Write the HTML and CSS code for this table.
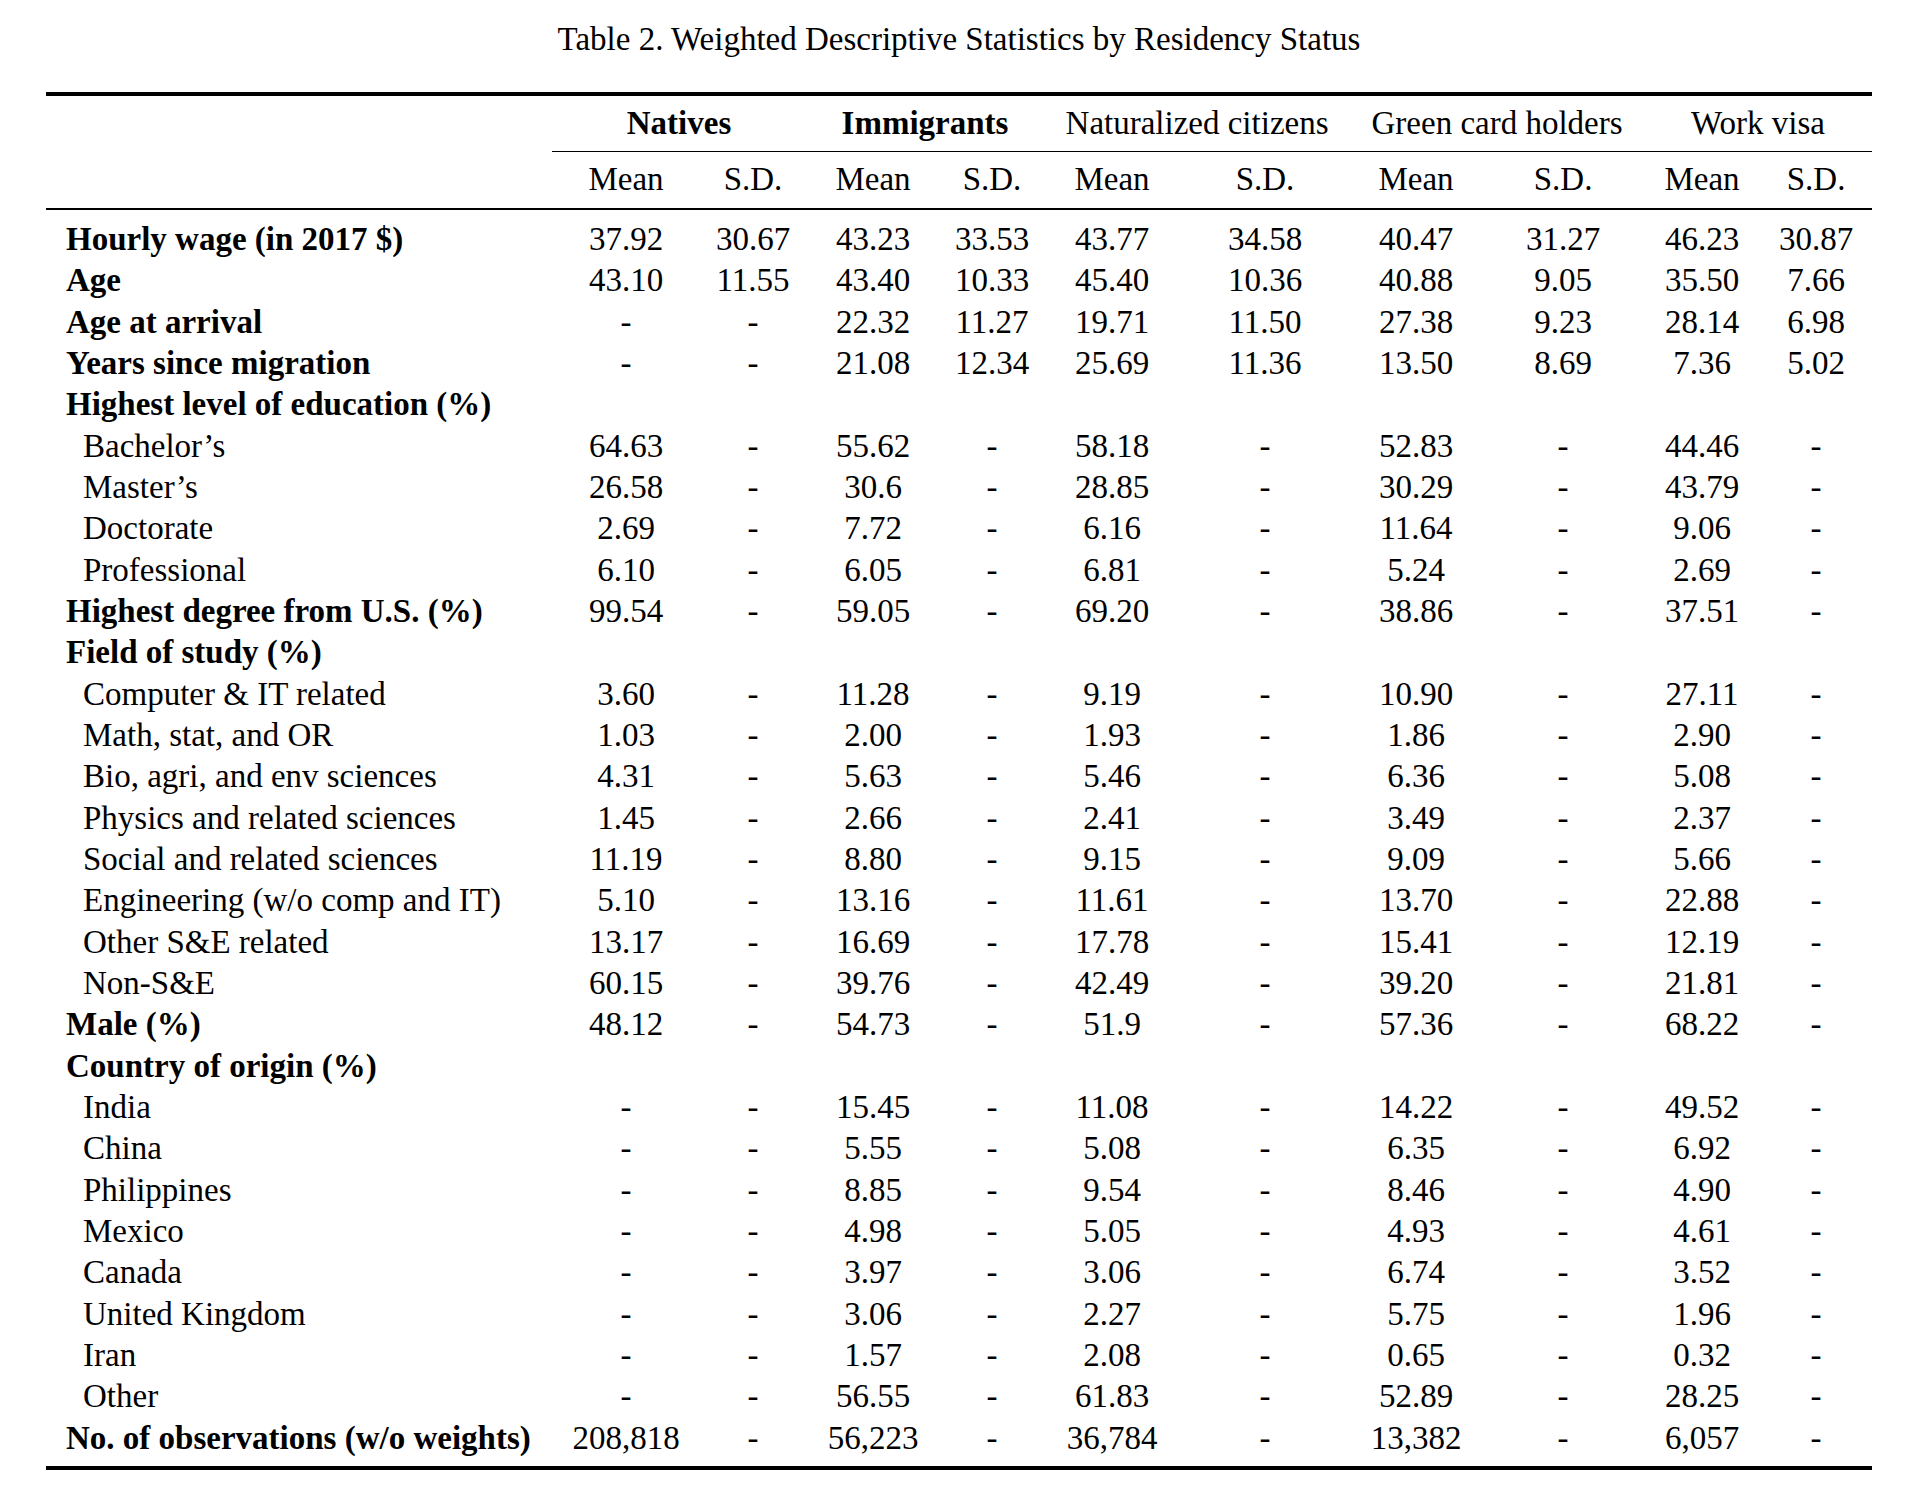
FILE: index.html
```html
<!DOCTYPE html>
<html lang="en">
<head>
<meta charset="utf-8">
<title>Table 2</title>
<link rel="stylesheet" href="styles.css">
</head>
<body>
<div class="page">
  <div class="caption">Table 2. Weighted Descriptive Statistics by Residency Status</div>
  <table class="stats">
    <colgroup>
      <col class="c-label">
      <col class="c1"><col class="c2"><col class="c3"><col class="c4"><col class="c5">
      <col class="c6"><col class="c7"><col class="c8"><col class="c9"><col class="c10">
    </colgroup>
    <thead>
      <tr class="grp">
        <th class="blank"></th>
        <th colspan="2" class="strong">Natives</th>
        <th colspan="2" class="strong">Immigrants</th>
        <th colspan="2">Naturalized citizens</th>
        <th colspan="2">Green card holders</th>
        <th colspan="2">Work visa</th>
      </tr>
      <tr class="sub">
        <th></th>
        <th>Mean</th><th>S.D.</th>
        <th>Mean</th><th>S.D.</th>
        <th>Mean</th><th>S.D.</th>
        <th>Mean</th><th>S.D.</th>
        <th>Mean</th><th>S.D.</th>
      </tr>
    </thead>
    <tbody>
      <tr><td class="lab b">Hourly wage (in 2017 $)</td><td>37.92</td><td>30.67</td><td>43.23</td><td>33.53</td><td>43.77</td><td>34.58</td><td>40.47</td><td>31.27</td><td>46.23</td><td>30.87</td></tr>
      <tr><td class="lab b">Age</td><td>43.10</td><td>11.55</td><td>43.40</td><td>10.33</td><td>45.40</td><td>10.36</td><td>40.88</td><td>9.05</td><td>35.50</td><td>7.66</td></tr>
      <tr><td class="lab b">Age at arrival</td><td>-</td><td>-</td><td>22.32</td><td>11.27</td><td>19.71</td><td>11.50</td><td>27.38</td><td>9.23</td><td>28.14</td><td>6.98</td></tr>
      <tr><td class="lab b">Years since migration</td><td>-</td><td>-</td><td>21.08</td><td>12.34</td><td>25.69</td><td>11.36</td><td>13.50</td><td>8.69</td><td>7.36</td><td>5.02</td></tr>
      <tr><td class="lab b">Highest level of education (%)</td><td></td><td></td><td></td><td></td><td></td><td></td><td></td><td></td><td></td><td></td></tr>
      <tr><td class="lab sub-lab">Bachelor’s</td><td>64.63</td><td>-</td><td>55.62</td><td>-</td><td>58.18</td><td>-</td><td>52.83</td><td>-</td><td>44.46</td><td>-</td></tr>
      <tr><td class="lab sub-lab">Master’s</td><td>26.58</td><td>-</td><td>30.6</td><td>-</td><td>28.85</td><td>-</td><td>30.29</td><td>-</td><td>43.79</td><td>-</td></tr>
      <tr><td class="lab sub-lab">Doctorate</td><td>2.69</td><td>-</td><td>7.72</td><td>-</td><td>6.16</td><td>-</td><td>11.64</td><td>-</td><td>9.06</td><td>-</td></tr>
      <tr><td class="lab sub-lab">Professional</td><td>6.10</td><td>-</td><td>6.05</td><td>-</td><td>6.81</td><td>-</td><td>5.24</td><td>-</td><td>2.69</td><td>-</td></tr>
      <tr><td class="lab b">Highest degree from U.S. (%)</td><td>99.54</td><td>-</td><td>59.05</td><td>-</td><td>69.20</td><td>-</td><td>38.86</td><td>-</td><td>37.51</td><td>-</td></tr>
      <tr><td class="lab b">Field of study (%)</td><td></td><td></td><td></td><td></td><td></td><td></td><td></td><td></td><td></td><td></td></tr>
      <tr><td class="lab sub-lab">Computer &amp; IT related</td><td>3.60</td><td>-</td><td>11.28</td><td>-</td><td>9.19</td><td>-</td><td>10.90</td><td>-</td><td>27.11</td><td>-</td></tr>
      <tr><td class="lab sub-lab">Math, stat, and OR</td><td>1.03</td><td>-</td><td>2.00</td><td>-</td><td>1.93</td><td>-</td><td>1.86</td><td>-</td><td>2.90</td><td>-</td></tr>
      <tr><td class="lab sub-lab">Bio, agri, and env sciences</td><td>4.31</td><td>-</td><td>5.63</td><td>-</td><td>5.46</td><td>-</td><td>6.36</td><td>-</td><td>5.08</td><td>-</td></tr>
      <tr><td class="lab sub-lab">Physics and related sciences</td><td>1.45</td><td>-</td><td>2.66</td><td>-</td><td>2.41</td><td>-</td><td>3.49</td><td>-</td><td>2.37</td><td>-</td></tr>
      <tr><td class="lab sub-lab">Social and related sciences</td><td>11.19</td><td>-</td><td>8.80</td><td>-</td><td>9.15</td><td>-</td><td>9.09</td><td>-</td><td>5.66</td><td>-</td></tr>
      <tr><td class="lab sub-lab">Engineering (w/o comp and IT)</td><td>5.10</td><td>-</td><td>13.16</td><td>-</td><td>11.61</td><td>-</td><td>13.70</td><td>-</td><td>22.88</td><td>-</td></tr>
      <tr><td class="lab sub-lab">Other S&amp;E related</td><td>13.17</td><td>-</td><td>16.69</td><td>-</td><td>17.78</td><td>-</td><td>15.41</td><td>-</td><td>12.19</td><td>-</td></tr>
      <tr><td class="lab sub-lab">Non-S&amp;E</td><td>60.15</td><td>-</td><td>39.76</td><td>-</td><td>42.49</td><td>-</td><td>39.20</td><td>-</td><td>21.81</td><td>-</td></tr>
      <tr><td class="lab b">Male (%)</td><td>48.12</td><td>-</td><td>54.73</td><td>-</td><td>51.9</td><td>-</td><td>57.36</td><td>-</td><td>68.22</td><td>-</td></tr>
      <tr><td class="lab b">Country of origin (%)</td><td></td><td></td><td></td><td></td><td></td><td></td><td></td><td></td><td></td><td></td></tr>
      <tr><td class="lab sub-lab">India</td><td>-</td><td>-</td><td>15.45</td><td>-</td><td>11.08</td><td>-</td><td>14.22</td><td>-</td><td>49.52</td><td>-</td></tr>
      <tr><td class="lab sub-lab">China</td><td>-</td><td>-</td><td>5.55</td><td>-</td><td>5.08</td><td>-</td><td>6.35</td><td>-</td><td>6.92</td><td>-</td></tr>
      <tr><td class="lab sub-lab">Philippines</td><td>-</td><td>-</td><td>8.85</td><td>-</td><td>9.54</td><td>-</td><td>8.46</td><td>-</td><td>4.90</td><td>-</td></tr>
      <tr><td class="lab sub-lab">Mexico</td><td>-</td><td>-</td><td>4.98</td><td>-</td><td>5.05</td><td>-</td><td>4.93</td><td>-</td><td>4.61</td><td>-</td></tr>
      <tr><td class="lab sub-lab">Canada</td><td>-</td><td>-</td><td>3.97</td><td>-</td><td>3.06</td><td>-</td><td>6.74</td><td>-</td><td>3.52</td><td>-</td></tr>
      <tr><td class="lab sub-lab">United Kingdom</td><td>-</td><td>-</td><td>3.06</td><td>-</td><td>2.27</td><td>-</td><td>5.75</td><td>-</td><td>1.96</td><td>-</td></tr>
      <tr><td class="lab sub-lab">Iran</td><td>-</td><td>-</td><td>1.57</td><td>-</td><td>2.08</td><td>-</td><td>0.65</td><td>-</td><td>0.32</td><td>-</td></tr>
      <tr><td class="lab sub-lab">Other</td><td>-</td><td>-</td><td>56.55</td><td>-</td><td>61.83</td><td>-</td><td>52.89</td><td>-</td><td>28.25</td><td>-</td></tr>
      <tr><td class="lab b">No. of observations (w/o weights)</td><td>208,818</td><td>-</td><td>56,223</td><td>-</td><td>36,784</td><td>-</td><td>13,382</td><td>-</td><td>6,057</td><td>-</td></tr>
    </tbody>
  </table>
</div>
</body>
</html>
```
FILE: styles.css
```css
html, body {
  margin: 0;
  padding: 0;
  background: #ffffff;
}

body {
  font-family: "Liberation Serif", "Times New Roman", serif;
  font-size: 33px;
  color: #000000;
}

.page {
  padding: 0 44px 0 46px;
}

.caption {
  text-align: center;
  font-size: 33px;
  line-height: 40px;
  padding-top: 19px;
  margin-bottom: 33px;
}

.stats {
  width: 1826px;
  table-layout: fixed;
  border-collapse: separate;
  border-spacing: 0;
  border-top: 4px solid #000;
  border-bottom: 4px solid #000;
}

.c-label { width: 506px; }
.c1 { width: 148px; }
.c2 { width: 106px; }
.c3 { width: 134px; }
.c4 { width: 104px; }
.c5 { width: 136px; }
.c6 { width: 170px; }
.c7 { width: 132px; }
.c8 { width: 162px; }
.c9 { width: 116px; }
.c10 { width: 112px; }

.stats th {
  font-weight: normal;
  text-align: center;
  padding: 0;
  white-space: nowrap;
}

.stats th.strong {
  font-weight: bold;
}

.grp th {
  line-height: 44px;
  padding-top: 5px;
  padding-bottom: 6px;
  border-bottom: 1px solid #000;
}

.grp th.blank {
  border-bottom-color: transparent;
}

.sub th {
  line-height: 44px;
  padding-top: 5px;
  padding-bottom: 7px;
  border-bottom: 2px solid #000;
}

.stats td {
  padding: 0;
  line-height: 41.33px;
  text-align: center;
  white-space: nowrap;
}

.stats tbody tr:first-child td {
  padding-top: 9px;
}

.stats tbody tr:last-child td {
  padding-bottom: 7px;
}

.stats td.lab {
  text-align: left;
  padding-left: 20px;
}

.stats td.b {
  font-weight: bold;
}

.stats td.sub-lab {
  padding-left: 37px;
}
```
